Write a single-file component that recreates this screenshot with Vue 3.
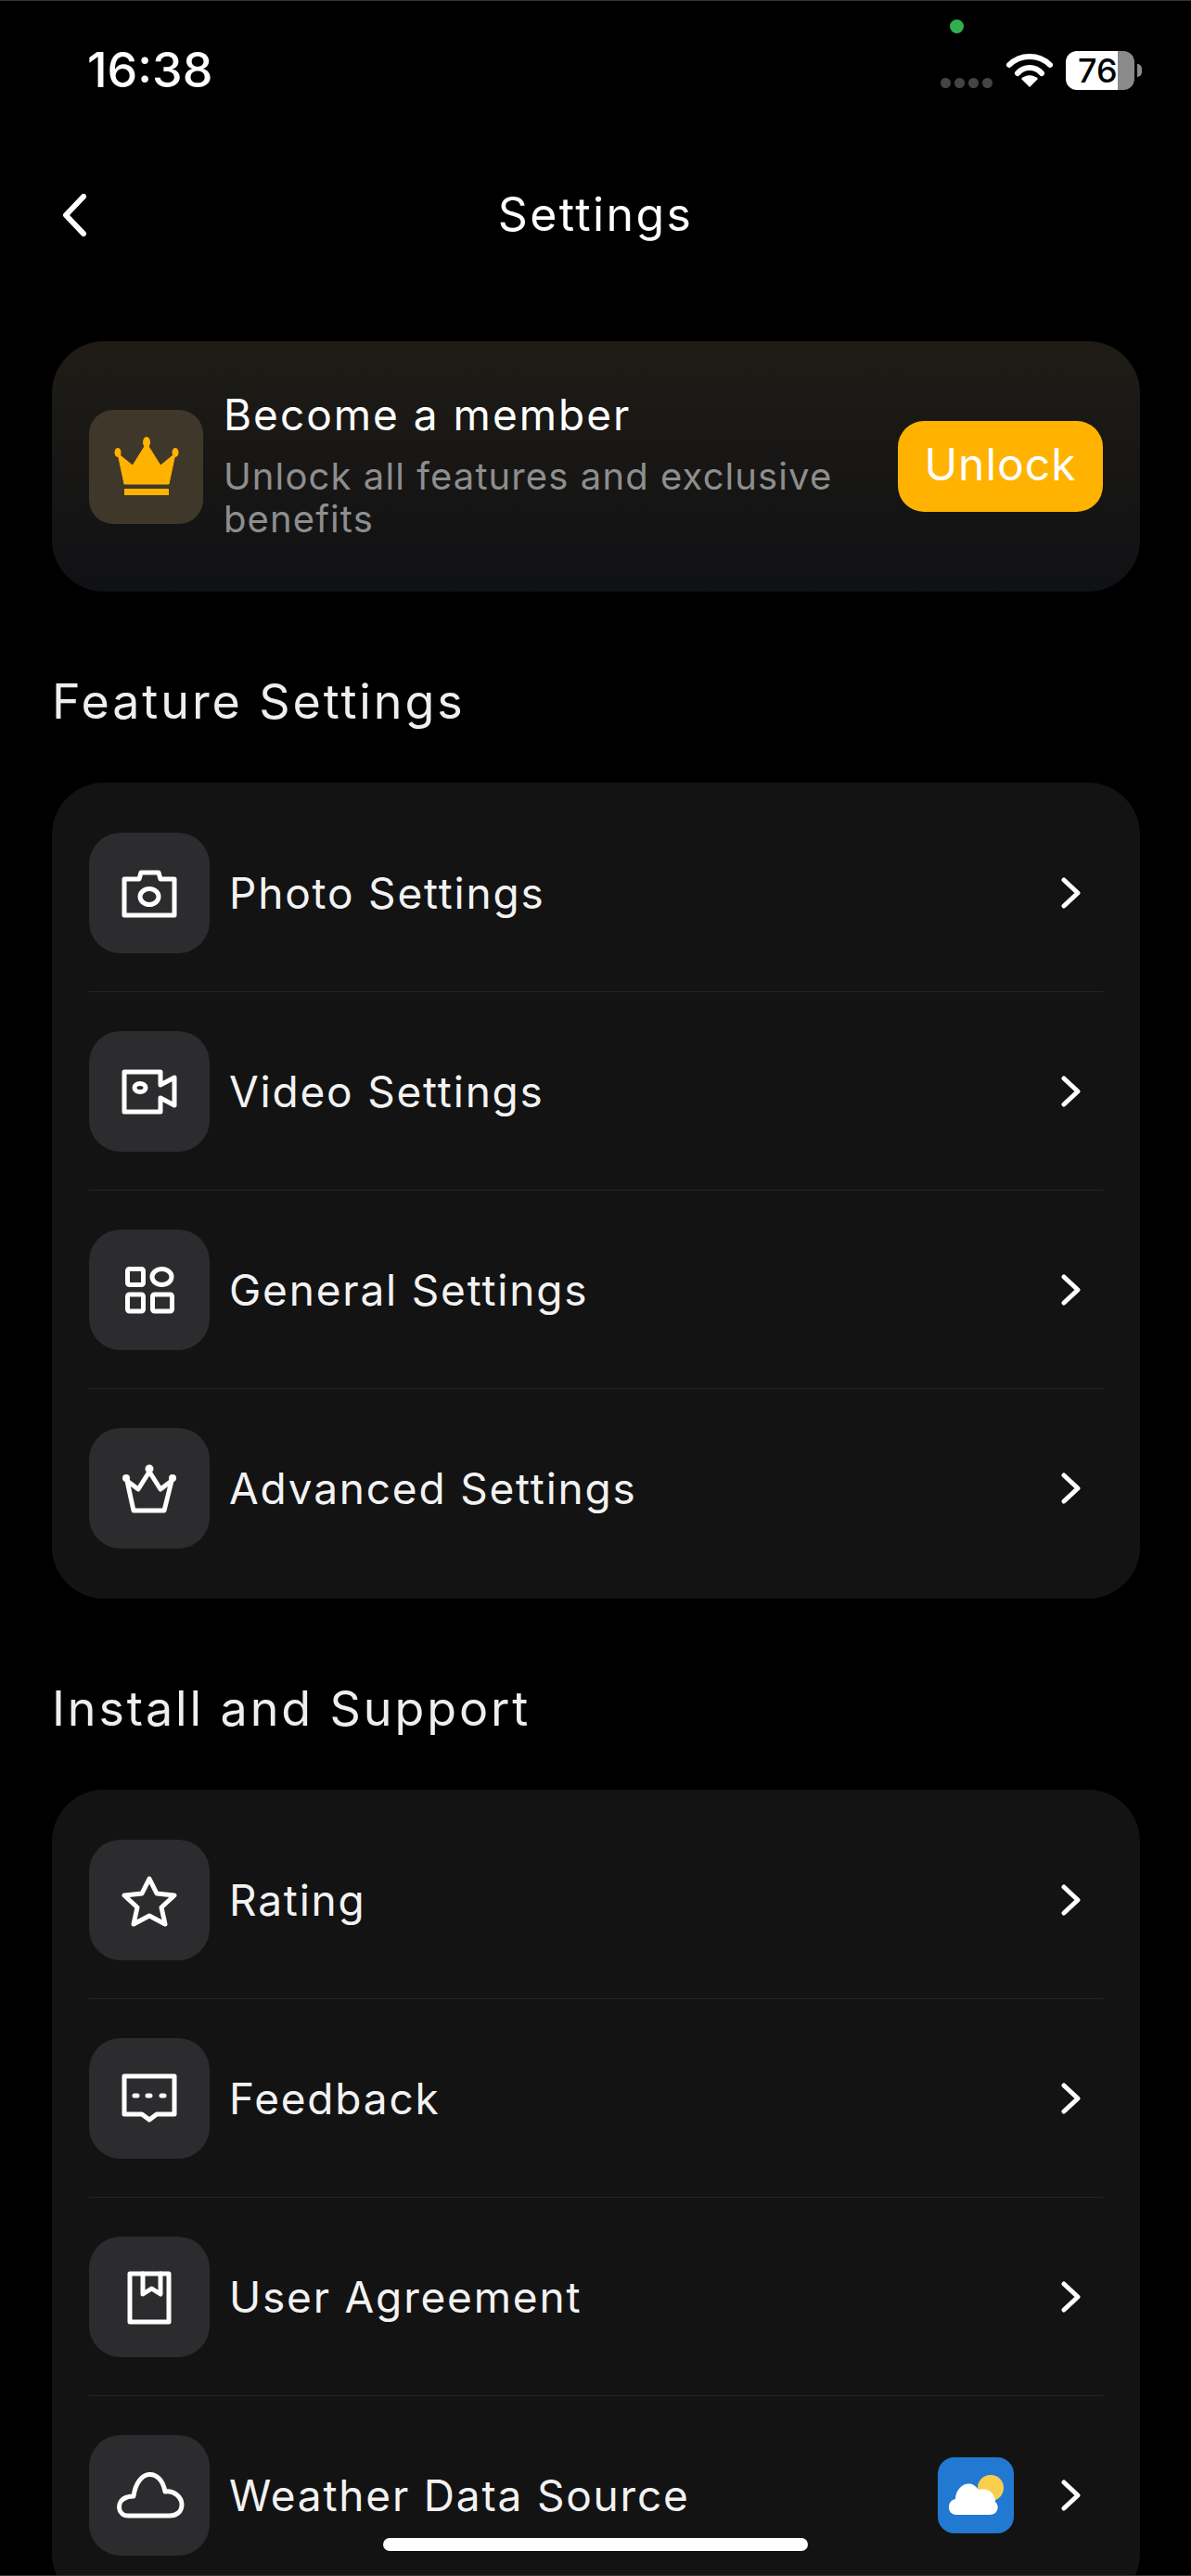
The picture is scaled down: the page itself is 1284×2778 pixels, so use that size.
<template>
  <div class="screen">
    <!-- Status bar -->
    <div class="status-bar">
      <span class="time">16:38</span>
      <span class="camera-dot"></span>
      <div class="status-icons">
        <div class="signal">
          <i v-for="n in 4" :key="n"></i>
        </div>
        <svg class="wifi" width="50" height="38" viewBox="0 0 50 38">
          <path d="M3 13 C15 1 35 1 47 13" fill="none" stroke="#fff" stroke-width="6" stroke-linecap="round" />
          <path d="M12 22 C19 14 31 14 38 22" fill="none" stroke="#fff" stroke-width="6" stroke-linecap="round" />
          <path d="M25 37 L16 28 C21 23 29 23 34 28 Z" fill="#fff" />
        </svg>
        <div class="battery">
          <div class="battery-body">
            <span class="battery-text">76</span>
          </div>
          <span class="battery-nub"></span>
        </div>
      </div>
    </div>

    <!-- Nav bar -->
    <div class="nav-bar">
      <svg class="back" width="30" height="46" viewBox="0 0 30 46">
        <path d="M25 3 L6 23 L25 43" fill="none" stroke="#fff" stroke-width="6" stroke-linecap="round" stroke-linejoin="round" />
      </svg>
      <span class="nav-title">Settings</span>
    </div>

    <div class="content">
      <!-- Member card -->
      <div class="member-card">
        <div class="member-icon">
          <svg width="70" height="64" viewBox="0 0 70 64">
            <path d="M11 51 L4 18 L20 31 L35 7 L50 31 L66 18 L59 51 Z" fill="#ffb300" stroke="#ffb300" stroke-width="1" stroke-linejoin="round" />
            <ellipse cx="4" cy="17" rx="3.5" ry="5" fill="#ffb300" />
            <ellipse cx="35" cy="6" rx="4" ry="6" fill="#ffb300" />
            <ellipse cx="66" cy="17" rx="3.5" ry="5" fill="#ffb300" />
            <rect x="11" y="56" width="48" height="7" fill="#ffb300" />
          </svg>
        </div>
        <div class="member-text">
          <div class="member-title">Become a member</div>
          <div class="member-sub">Unlock all features and exclusive benefits</div>
        </div>
        <div class="unlock">Unlock</div>
      </div>

      <template v-for="section in sections" :key="section.title">
        <h2 class="section-title">{{ section.title }}</h2>
        <div class="list-card">
          <div v-for="item in section.items" :key="item.label" class="row">
            <div class="tile">
              <svg class="row-icon" width="64" height="64" viewBox="0 0 64 64" fill="none" stroke="#fff" stroke-width="5" stroke-linejoin="round" stroke-linecap="round">
                <template v-if="item.icon === 'camera'">
                  <path d="M5 17 H21 L23 10 H42 L44 17 H59 V56 H5 Z" />
                  <ellipse cx="32" cy="36" rx="10" ry="8.5" />
                </template>
                <template v-else-if="item.icon === 'video'">
                  <path d="M5 11 H44 V25 L59 17 V47 L44 39 V54 H5 Z" />
                  <ellipse cx="22" cy="28" rx="6" ry="4.5" />
                </template>
                <template v-else-if="item.icon === 'grid'">
                  <rect x="8.5" y="9.5" width="17" height="17" rx="2" />
                  <ellipse cx="45.5" cy="18" rx="10.5" ry="8.5" />
                  <rect x="8.5" y="37" width="17" height="18" rx="2" />
                  <rect x="35.5" y="37" width="21" height="18" rx="2" />
                </template>
                <template v-else-if="item.icon === 'crown'">
                  <path d="M15 56 H48 L56 24 L44 33 L32 14 L20 33 L8 24 Z" />
                  <circle cx="7" cy="21" r="4" fill="#fff" stroke="none" />
                  <circle cx="32" cy="11" r="4.5" fill="#fff" stroke="none" />
                  <circle cx="57" cy="21" r="4" fill="#fff" stroke="none" />
                </template>
                <template v-else-if="item.icon === 'star'">
                  <path d="M32 9 L40 25 L59 27 L45 40 L49 58 L32 49 L15 58 L19 40 L5 27 L24 25 Z" />
                </template>
                <template v-else-if="item.icon === 'feedback'">
                  <path d="M5 8 H59 V49 H40 L32 55 L24 49 H5 Z" />
                  <path d="M16 29 H19 M30 29 H33 M45 29 H48" />
                </template>
                <template v-else-if="item.icon === 'book'">
                  <path d="M11 7 H53 V59 H11 Z" />
                  <path d="M25 7 V29 L34.5 23 L44 29 V7" />
                </template>
                <template v-else-if="item.icon === 'cloud'">
                  <path d="M9 54 C-2 54 -5 38 8 34 C11 33 13 33 15 33 C19 3 44 2 49 28 C58 26 67 34 67 42 C67 50 61 54 54 54 Z" />
                </template>
              </svg>
            </div>
            <span class="row-label">{{ item.label }}</span>
            <svg v-if="item.badge" class="weather" width="82" height="82" viewBox="0 0 82 82">
              <rect width="82" height="82" rx="18" fill="#2279d2" />
              <circle cx="57" cy="33" r="14" fill="#f9ce4d" />
              <path d="M20 62 C10 62 9 47 19 45 C19 32 34 21 44 35 C55 32 62 40 62 48 C67 52 65 62 56 62 Z" fill="#fff" />
            </svg>
            <svg class="chevron" width="22" height="34" viewBox="0 0 22 34">
              <path d="M3 3 L18 17 L3 31" fill="none" stroke="#fff" stroke-width="5" stroke-linecap="round" stroke-linejoin="round" />
            </svg>
          </div>
        </div>
      </template>
    </div>

    <div class="home-indicator"></div>
  </div>
</template>

<script setup>
const sections = [
  {
    title: 'Feature Settings',
    items: [
      { label: 'Photo Settings', icon: 'camera' },
      { label: 'Video Settings', icon: 'video' },
      { label: 'General Settings', icon: 'grid' },
      { label: 'Advanced Settings', icon: 'crown' }
    ]
  },
  {
    title: 'Install and Support',
    items: [
      { label: 'Rating', icon: 'star' },
      { label: 'Feedback', icon: 'feedback' },
      { label: 'User Agreement', icon: 'book' },
      { label: 'Weather Data Source', icon: 'cloud', badge: true }
    ]
  }
]
</script>

<style>
html, body {
  margin: 0;
  background: #000;
}
</style>

<style scoped>
.screen {
  position: relative;
  width: 1284px;
  height: 2778px;
  overflow: hidden;
  background: #000;
  color: #fff;
  font-family: Inter, "Liberation Sans", sans-serif;
}

.screen::after {
  content: "";
  position: absolute;
  inset: 0;
  border-top: 1px solid #333;
  border-bottom: 1px solid #333;
  pointer-events: none;
}

/* Status bar */
.status-bar {
  position: relative;
  height: 170px;
  display: flex;
  justify-content: space-between;
  align-items: flex-start;
  box-sizing: border-box;
  padding: 46px 53px 0 94px;
}

.time {
  font-size: 52px;
  font-weight: 500;
  line-height: 60px;
}

.camera-dot {
  position: absolute;
  left: 1024px;
  top: 21px;
  width: 15px;
  height: 15px;
  border-radius: 50%;
  background: #30b050;
}

.status-icons {
  display: flex;
  align-items: center;
  margin-top: 9px;
}

.signal {
  display: flex;
  gap: 4px;
  margin-top: 27px;
  margin-right: 15px;
}

.signal i {
  display: block;
  width: 11px;
  height: 11px;
  border-radius: 50%;
  background: #444;
}

.wifi {
  margin-right: 14px;
}

.battery {
  display: flex;
  align-items: center;
}

.battery-body {
  width: 74px;
  height: 42px;
  box-sizing: border-box;
  padding-left: 13px;
  border-radius: 12px;
  background: linear-gradient(90deg, #fff 56px, #8a8a8a 56px);
  color: #000;
}

.battery-text {
  display: block;
  font-size: 36px;
  font-weight: 500;
  line-height: 42px;
}

.battery-nub {
  width: 5px;
  height: 14px;
  margin-left: 3px;
  border-radius: 0 7px 7px 0;
  background: #8a8a8a;
}

/* Nav bar */
.nav-bar {
  position: relative;
  height: 120px;
  display: flex;
  align-items: center;
  justify-content: center;
}

.back {
  position: absolute;
  left: 65px;
  top: 39px;
}

.nav-title {
  padding-top: 2px;
  font-size: 50px;
  font-weight: 400;
  line-height: 60px;
  letter-spacing: 2.4px;
}

.content {
  padding: 78px 55px 0 56px;
}

/* Member card */
.member-card {
  height: 270px;
  box-sizing: border-box;
  display: flex;
  align-items: center;
  padding: 0 40px;
  border-radius: 56px;
  background: linear-gradient(180deg, #1f1c16 0%, #101114 100%);
}

.member-icon {
  flex: none;
  width: 123px;
  height: 123px;
  display: flex;
  align-items: center;
  justify-content: center;
  border-radius: 26px;
  background: #3f3729;
}

.member-text {
  flex: 1;
  margin-left: 22px;
  margin-right: 35px;
  padding-bottom: 7px;
}

.member-title {
  font-size: 46px;
  font-weight: 400;
  line-height: 60px;
  letter-spacing: 2px;
  margin-bottom: 14px;
}

.member-sub {
  font-size: 40px;
  line-height: 46px;
  letter-spacing: 1.1px;
  color: #8e8e8e;
}

.unlock {
  flex: none;
  width: 221px;
  height: 98px;
  padding-bottom: 6px;
  box-sizing: border-box;
  display: flex;
  align-items: center;
  justify-content: center;
  border-radius: 28px;
  background: #ffb300;
  font-size: 48px;
  font-weight: 400;
  letter-spacing: 1px;
}

.section-title {
  margin: 90px 0 58px;
  font-size: 52px;
  font-weight: 400;
  line-height: 58px;
  letter-spacing: 2.9px;
  color: #eee;
}

/* Lists */
.list-card {
  padding: 12px 40px;
  border-radius: 56px;
  background: #131313;
}

.row {
  height: 214px;
  box-sizing: border-box;
  display: flex;
  align-items: center;
  border-bottom: 1px solid #262626;
}

.row:last-child {
  border-bottom: none;
}

.tile {
  flex: none;
  width: 130px;
  height: 130px;
  display: flex;
  align-items: center;
  justify-content: center;
  border-radius: 34px;
  background: #2c2c2e;
}

.row-icon {
  overflow: visible;
}

.row-label {
  flex: 1;
  margin-left: 21px;
  font-size: 46px;
  line-height: 56px;
  letter-spacing: 1.8px;
  color: #f2f2f2;
}

.weather {
  flex: none;
  margin-right: 51px;
}

.chevron {
  flex: none;
  margin-right: 23px;
}

.home-indicator {
  position: absolute;
  left: 413px;
  top: 2737px;
  width: 458px;
  height: 14px;
  border-radius: 7px;
  background: #fff;
}
</style>
